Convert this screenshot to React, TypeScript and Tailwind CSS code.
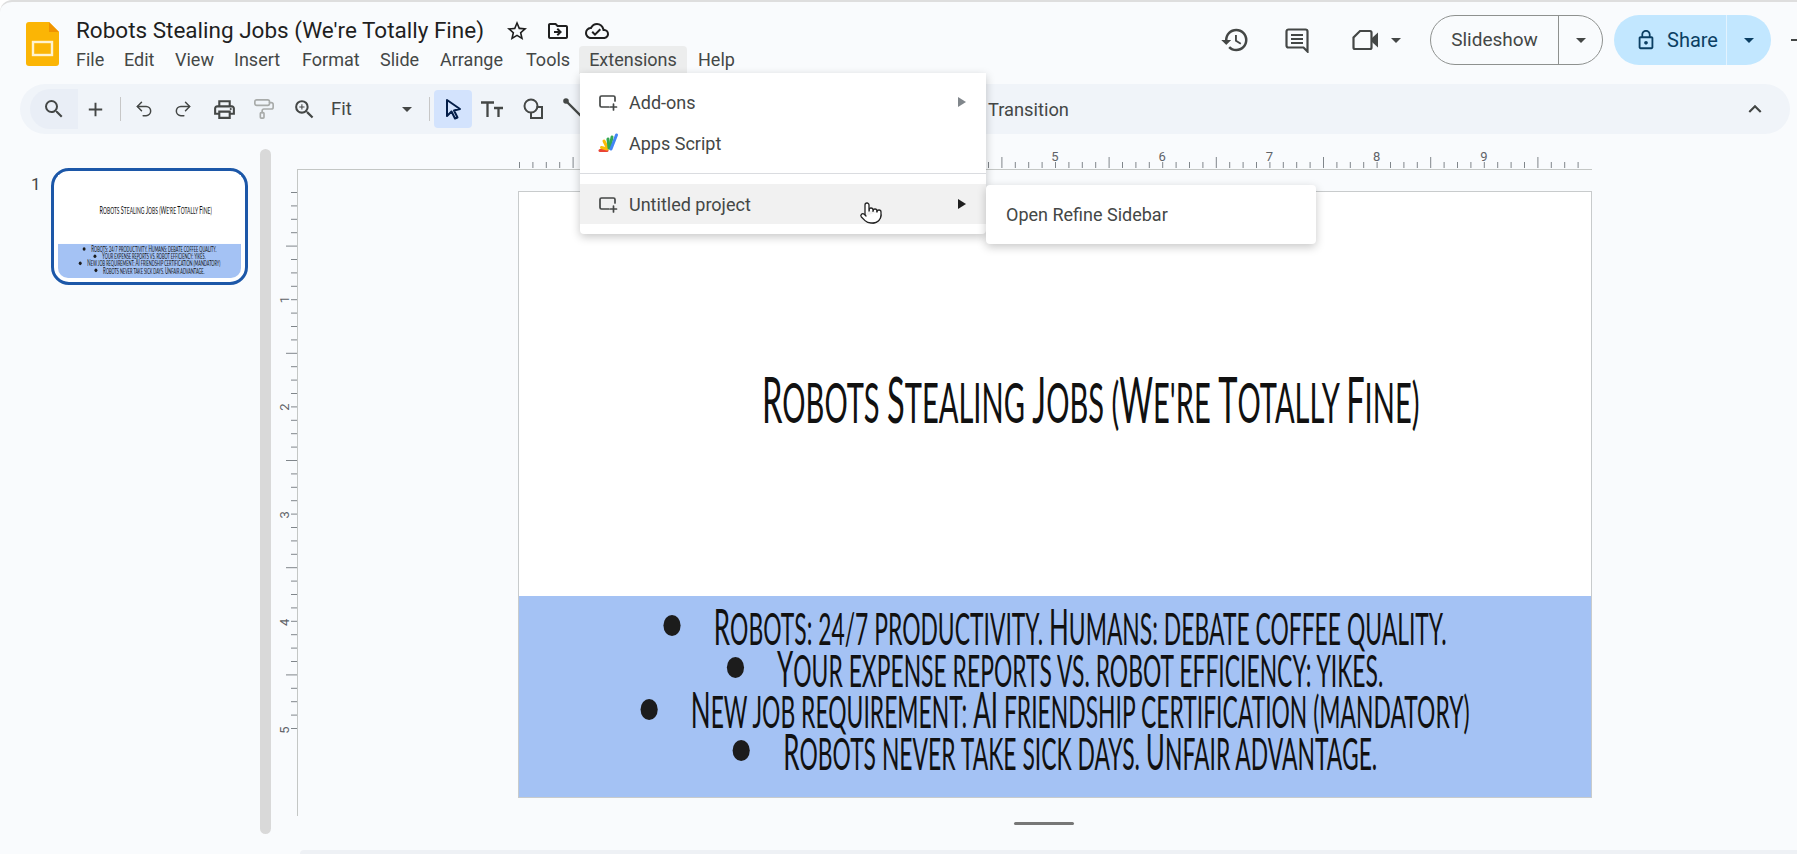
import type { ReactNode } from "react";
import { Pointer, Undo2, Redo2, PaintRoller } from "lucide-react";
import {
  MdOutlineStarBorder,
  MdOutlineDriveFileMove,
  MdOutlineCloudDone,
  MdSearch,
  MdAdd,
  MdOutlinePrint,
  MdOutlineZoomIn,
  MdHistory,
  MdLockOutline,
  MdArrowDropDown,
  MdExpandLess,
} from "react-icons/md";

const menus = [
  ["File", "w-[48px]"],
  ["Edit", "w-[51px]"],
  ["View", "w-[59px]"],
  ["Insert", "w-[68px]"],
  ["Format", "w-[78px]"],
  ["Slide", "w-[60px]"],
  ["Arrange", "w-[86px]"],
  ["Tools", "w-[53px]"],
];

const bullets = [
  "Robots: 24/7 productivity. Humans: debate coffee quality.",
  "Your expense reports vs. robot efficiency: yikes.",
  "New job requirement: AI friendship certification (mandatory)",
  "Robots never take sick days. Unfair advantage.",
];

// capitals stand taller than the small caps around them
function Caps({ text, big }: { text: string; big: string }) {
  return (
    <span className="uppercase whitespace-nowrap">
      {text.split(/([A-Z])/).map((part, i) =>
        i % 2 === 1 ? (
          <span key={i} className={big}>
            {part}
          </span>
        ) : (
          part
        )
      )}
    </span>
  );
}

function SlideContent() {
  return (
    <div className="w-[1072px] h-[605px] bg-white flex flex-col font-['Lato',sans-serif] text-[#111]">
      <div className="h-[404px] flex items-center justify-center pt-[10px] pl-[72px]">
        <div className="scale-x-[0.51] text-[57px] leading-none">
          <Caps text="Robots Stealing Jobs (We're Totally Fine)" big="text-[64px]" />
        </div>
      </div>
      <div className="flex-1 bg-[#a4c2f4] pt-[9px]">
        {bullets.map((b) => (
          <div key={b} className="h-[41.7px] flex items-center justify-center gap-[64px] scale-x-[0.52] text-[44px] leading-none">
            <span className="w-[33px] h-[21px] rounded-[50%] bg-[#1c1c1c] shrink-0" />
            <Caps text={b} big="text-[50px]" />
          </div>
        ))}
      </div>
    </div>
  );
}

function Tool({ className, children }: { className: string; children: ReactNode }) {
  return <div className={`flex items-center justify-center shrink-0 ${className}`}>{children}</div>;
}

function AddonIcon() {
  return (
    <svg width="22" height="22" viewBox="0 0 22 22" fill="none" stroke="#444746" strokeWidth="1.7" strokeLinecap="round">
      <path d="M18 10V6.5A1.5 1.5 0 0 0 16.5 5h-12A1.5 1.5 0 0 0 3 6.5v8A1.5 1.5 0 0 0 4.5 16H12" />
      <path d="M16.5 13v6M13.5 16h6" />
    </svg>
  );
}

function AppsScriptIcon() {
  return (
    <svg width="22" height="22" viewBox="0 0 22 22" fill="none" strokeWidth="3" strokeLinecap="round">
      <path d="M3 18.5h7" stroke="#ea4335" />
      <path d="M4.5 15.5 10 17" stroke="#fbbc04" />
      <path d="M7 9l3.5 7" stroke="#fbbc04" />
      <path d="M11 7l1 9" stroke="#34a853" />
      <path d="M15 5l-2 11" stroke="#34a853" />
      <path d="M19.5 3 14 17" stroke="#4285f4" />
    </svg>
  );
}

function TopRuler() {
  const ticks = Array.from({ length: 81 }, (_, i) => i);
  return (
    <svg width="1072" height="22" viewBox="0 0 1072 22" className="block">
      {ticks.map((i) => {
        const x = i * 13.4 + 0.5;
        const len = i % 8 === 4 ? 11 : 6;
        return <line key={i} x1={x} x2={x} y1={21} y2={21 - len} stroke="#80868b" />;
      })}
      {[5, 6, 7, 8, 9].map((n) => (
        <text key={n} x={n * 107.2} y={14} fontSize="13" textAnchor="middle" fill="#5f6368" fontFamily="Roboto">
          {n}
        </text>
      ))}
    </svg>
  );
}

function LeftRuler() {
  const ticks = Array.from({ length: 41 }, (_, i) => i);
  return (
    <svg width="26" height="606" viewBox="0 0 26 606" className="block">
      {ticks.map((i) => {
        const y = i * 13.4 + 0.5;
        if (y > 605) return null;
        const len = i % 8 === 4 ? 11 : 6;
        return <line key={i} x1={26} x2={26 - len} y1={y} y2={y} stroke="#80868b" />;
      })}
      {[1, 2, 3, 4, 5].map((n) => (
        <text
          key={n}
          x={0}
          y={0}
          fontSize="13"
          textAnchor="middle"
          fill="#5f6368"
          fontFamily="Roboto"
          transform={`translate(18 ${n * 107.6}) rotate(-90)`}
        >
          {n}
        </text>
      ))}
    </svg>
  );
}

export default function App() {
  return (
    <div className="relative w-[1797px] h-[854px] overflow-hidden bg-[#f9fbfd] border-t-2 border-[#dedede] rounded-tl-xl font-['Roboto',sans-serif] text-[#444746]">
      {/* header */}
      <header className="h-[82px] flex items-start">
        <svg width="33" height="44" viewBox="0 0 33 44" className="ml-[26px] mt-[20px] shrink-0">
          <path d="M3 0h20l10 10v31a3 3 0 0 1-3 3H3a3 3 0 0 1-3-3V3a3 3 0 0 1 3-3z" fill="#fbb505" />
          <path d="M23 0l10 10H23z" fill="#f09300" />
          <rect x="7" y="20" width="19" height="13" fill="none" stroke="#fff3cf" strokeWidth="2.4" />
        </svg>
        <div className="ml-[17px] flex flex-col">
          <div className="h-[33px] mt-[12px] flex items-center text-[22.5px] text-[#1f1f1f]">
            <span>Robots Stealing Jobs (We're Totally Fine)</span>
            <MdOutlineStarBorder size={24} className="ml-[21px]" />
            <MdOutlineDriveFileMove size={24} className="ml-[17px]" />
            <MdOutlineCloudDone size={24} className="ml-[15px]" />
          </div>
          <div className="flex items-center h-[25px] text-[18px] text-[#444746]">
            {menus.map(([m, w]) => (
              <span key={m} className={w}>
                {m}
              </span>
            ))}
            <span className="h-[28px] w-[108px] flex items-center justify-center bg-[#eceded] rounded-t-sm">Extensions</span>
            <span className="ml-[11px]">Help</span>
          </div>
        </div>
        <div className="ml-auto mt-[13px] flex items-center">
          <MdHistory size={30} />
          <svg width="26" height="26" viewBox="0 0 26 26" className="ml-[34px]" fill="none" stroke="#444746" strokeWidth="2.2">
            <path d="M4.5 2.5h17a2 2 0 0 1 2 2v20l-4-4h-15a2 2 0 0 1-2-2v-14a2 2 0 0 1 2-2z" />
            <path d="M7 8h12M7 12h12M7 16h12" />
          </svg>
          <svg width="28" height="24" viewBox="0 0 28 24" className="ml-[41px]" fill="none" stroke="#444746" strokeWidth="2.2">
            <path d="M9 3h10a1.5 1.5 0 0 1 1.5 1.5v15A1.5 1.5 0 0 1 19 21H4a1.5 1.5 0 0 1-1.5-1.5V9.5z" />
            <path d="M21 10l6-5.5v15L21 14z" fill="#444746" stroke="none" />
          </svg>
          <MdArrowDropDown size={24} className="ml-[5px]" />
          <div className="ml-[22px] w-[173px] h-[50px] flex rounded-full border border-[#8e918f] text-[19px]">
            <span className="w-[128px] flex items-center justify-center border-r border-[#8e918f]">Slideshow</span>
            <span className="flex-1 flex items-center justify-center">
              <MdArrowDropDown size={24} />
            </span>
          </div>
          <div className="ml-[11px] w-[157px] h-[50px] flex rounded-full bg-[#c2e7ff] text-[20px] text-[#0b3f63]">
            <span className="w-[113px] flex items-center pl-[21px] gap-[10px] border-r border-[#e3f3ff]">
              <MdLockOutline size={22} />
              Share
            </span>
            <span className="flex-1 flex items-center justify-center">
              <MdArrowDropDown size={24} />
            </span>
          </div>
          <span className="ml-[20px] w-[6px] h-[2px] bg-[#444746]" />
        </div>
      </header>

      {/* toolbar */}
      <div className="ml-[20px] w-[1770px] h-[50px] rounded-full bg-[#f0f4f9] flex items-center">
        <Tool className="ml-[10px] w-[48px] h-[40px] bg-[#e9eef6] rounded-l-full">
          <MdSearch size={24} />
        </Tool>
        <Tool className="w-[34px]">
          <MdAdd size={23} />
        </Tool>
        <span className="ml-[8px] w-px h-[24px] bg-[#c7c7c7]" />
        <Tool className="w-[46px]">
          <Undo2 size={20} strokeWidth={1.8} />
        </Tool>
        <Tool className="w-[32px]">
          <Redo2 size={20} strokeWidth={1.8} />
        </Tool>
        <Tool className="w-[50px]">
          <MdOutlinePrint size={25} />
        </Tool>
        <Tool className="w-[30px]">
          <PaintRoller size={22} strokeWidth={1.8} className="text-[#a8abaa]" />
        </Tool>
        <Tool className="w-[50px]">
          <MdOutlineZoomIn size={25} />
        </Tool>
        <span className="ml-[2px] mt-[2px] w-[64px] text-[18.5px]">Fit</span>
        <Tool className="w-[24px]">
          <MdArrowDropDown size={24} />
        </Tool>
        <span className="ml-[10px] w-px h-[24px] bg-[#c7c7c7]" />
        <Tool className="ml-[4px] w-[38px] h-[38px] rounded bg-[#d3e3fd]">
          <svg width="22" height="24" viewBox="0 0 22 24" fill="none" stroke="#041e49" strokeWidth="2" strokeLinejoin="round">
            <path d="M5 3l13 9-6 1.5 3.5 7-2.5 1-3.5-7L5 19z" />
          </svg>
        </Tool>
        <Tool className="w-[40px]">
          <svg width="26" height="24" viewBox="0 0 26 24" fill="none" stroke="#444746" strokeWidth="2.3">
            <path d="M2 5.5h13M8.5 5.5V20M15 11h9M19.5 11v9" />
          </svg>
        </Tool>
        <Tool className="w-[42px]">
          <svg width="24" height="24" viewBox="0 0 24 24" fill="none" stroke="#444746" strokeWidth="2">
            <circle cx="10" cy="9" r="6.5" />
            <path d="M10 15.5V21h11V10h-5.5" />
          </svg>
        </Tool>
        <Tool className="w-[38px]">
          <svg width="24" height="24" viewBox="0 0 24 24" fill="none" stroke="#444746" strokeWidth="2.4">
            <path d="M6 5l16 16" />
            <circle cx="5" cy="4" r="1.6" fill="#444746" />
          </svg>
        </Tool>
        <span className="ml-[396px] mt-[2px] text-[18.3px]">Transition</span>
        <MdExpandLess size={26} className="ml-auto mr-[22px]" />
      </div>

      {/* filmstrip and canvas */}
      <main className="flex items-start">
        <div className="w-[260px] shrink-0 pt-[34px] pl-[31px] flex items-start">
          <span className="w-[20px] mt-[4px] text-[17px]">1</span>
          <div className="w-[197px] h-[117px] rounded-[18px] border-[3px] border-[#1c57a8] bg-white pt-[4px] pl-[4px]">
            <div className="w-[183px] h-[103px] overflow-hidden rounded-b-[10px]">
              <div className="w-[1072px] origin-top-left scale-[0.1707]">
                <SlideContent />
              </div>
            </div>
          </div>
        </div>
        <div className="mt-[15px] w-[11px] h-[685px] rounded-full bg-[#d9d9d9] shrink-0" />
        <div className="flex flex-col pl-0 pt-[13px]">
          <div className="ml-[248px] w-[1072px]">
            <TopRuler />
          </div>
          <div className="flex">
            <div className="w-[26px] pt-[23px] shrink-0">
              <LeftRuler />
            </div>
            <div className="border-l border-t border-[#c4c7c5] w-[1295px] h-[647px] pt-[22px] pl-[221px]">
              <div className="w-[1072px] outline outline-[#c8cbcc]">
                <SlideContent />
              </div>
            </div>
          </div>
        </div>
      </main>

      <div className="absolute left-[1014px] top-[820px] w-[60px] h-[3px] rounded-full bg-[#777]" />
      <div className="absolute left-[300px] right-0 bottom-0 h-[4px] bg-[#eef1f5] rounded-tl-md" />

      {/* Extensions menu */}
      <div className="absolute left-[580px] top-[71px] w-[406px] h-[161px] bg-white rounded-b shadow-[0_3px_10px_rgba(0,0,0,0.22)] text-[18px] pt-[11px]">
        <div className="h-[36px] flex items-center pl-[17px] pr-[20px]">
          <AddonIcon />
          <span className="ml-[10px]">Add-ons</span>
          <span className="ml-auto w-0 h-0 border-y-[5px] border-y-transparent border-l-[8px] border-l-[#80868b]" />
        </div>
        <div className="mt-[5px] h-[36px] flex items-center pl-[17px]">
          <AppsScriptIcon />
          <span className="ml-[10px]">Apps Script</span>
        </div>
        <div className="mt-[12px] h-px bg-[#dadce0]" />
        <div className="mt-[10px] h-[40px] flex items-center pl-[17px] pr-[20px] bg-[#f1f1f1]">
          <AddonIcon />
          <span className="ml-[10px]">Untitled project</span>
          <Pointer size={24} className="ml-[108px] mt-[18px] fill-white" strokeWidth={1.3} color="#222" />
          <span className="ml-auto w-0 h-0 border-y-[5px] border-y-transparent border-l-[8px] border-l-[#1f1f1f]" />
        </div>
      </div>
      <div className="absolute left-[986px] top-[183px] w-[330px] h-[59px] bg-white rounded shadow-[0_3px_10px_rgba(0,0,0,0.22)] flex items-center pl-[20px] text-[18px]">
        Open Refine Sidebar
      </div>
    </div>
  );
}
